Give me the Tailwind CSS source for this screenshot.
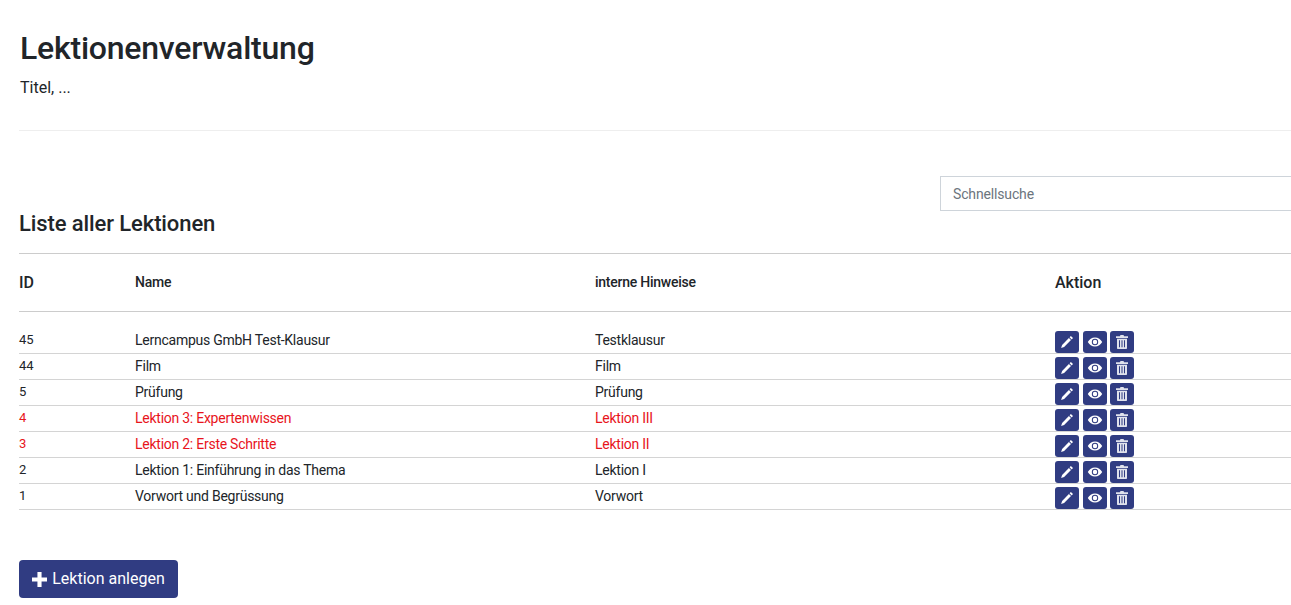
<!DOCTYPE html>
<html lang="de">
<head>
<meta charset="utf-8">
<title>Lektionenverwaltung</title>
<script src="https://cdn.jsdelivr.net/npm/@tailwindcss/browser@4"></script>
</head>
<body class="bg-white overflow-hidden font-['Roboto',sans-serif] text-[#212529]">
<div class="w-[1291px] h-[605px] overflow-hidden pl-[19px]">
  <header class="pt-[29px]">
    <h1 class="text-[32px] leading-[38px] font-medium tracking-[-0.22px] pl-px">Lektionenverwaltung</h1>
    <p class="text-base leading-6 mt-[9px] pl-px">Titel, ...</p>
    <hr class="mt-[30px] border-t border-[#eeeeee]">
  </header>
  <div class="relative h-[122px]">
    <input type="text" placeholder="Schnellsuche" class="absolute left-[921px] top-[45px] w-[360px] h-[35px] border border-[#ced4da] px-3 text-sm tracking-[-0.15px] text-[#495057] placeholder:text-[#6c757d] outline-none">
    <h2 class="absolute left-0 top-[80px] text-[22px] leading-[26px] font-medium tracking-[-0.1px]">Liste aller Lektionen</h2>
  </div>
  <table class="w-[1272px] table-fixed border-collapse text-sm tracking-[-0.25px]">
    <colgroup><col class="w-[116px]"><col class="w-[460px]"><col class="w-[460px]"><col class="w-[236px]"></colgroup>
    <thead>
      <tr class="h-[58px] border-y border-[#cccccc] text-left">
        <th class="font-medium text-base tracking-normal">ID</th>
        <th class="font-medium pb-[2px]">Name</th>
        <th class="font-medium pb-[2px]">interne Hinweise</th>
        <th class="font-medium text-base tracking-normal">Aktion</th>
      </tr>
    </thead>
    <tbody>
      <tr><td class="h-[16px] p-0" colspan="4"></td></tr>
      <tr class="h-[26px] border-b border-[#d4d4d4]">
        <td class="align-bottom pb-[3px] text-[13px] tracking-normal">45</td><td class="align-bottom pb-[3px]">Lerncampus GmbH Test-Klausur</td><td class="align-bottom pb-[3px]">Testklausur</td>
        <td class="align-bottom"><div class="flex gap-[3.5px]">
          <button class="w-6 h-[22px] rounded-[3px] bg-[#303c82] flex items-center justify-center"><svg viewBox="0 0 14 14" class="w-[14px] h-[14px]" fill="#fff"><path d="M10.900 1l2.100 2.100-1.300 1.300-2.100-2.100zM8.900 3l2.100 2.100-6.900 6.900-3 1 1-3z"/></svg></button>
          <button class="w-6 h-[22px] rounded-[3px] bg-[#303c82] flex items-center justify-center"><svg viewBox="0 0 16 12" class="w-[16px] h-[12px]" fill="#fff"><path fill-rule="evenodd" d="M8 1.500C4.800 1.500 2.300 3.300.8 6c1.500 2.700 4 4.500 7.200 4.500s5.700-1.800 7.200-4.500C13.700 3.300 11.200 1.500 8 1.500zm0 1.300a3.200 3.200 0 110 6.400 3.200 3.200 0 010-6.400z"/><circle cx="8" cy="6" r="2.200"/></svg></button>
          <button class="w-6 h-[22px] rounded-[3px] bg-[#303c82] flex items-center justify-center"><svg viewBox="0 0 14 14" class="w-[14px] h-[14px]" fill="#fff"><path fill-rule="evenodd" d="M5.500 0h3l.6 1.300H13v1.600H1V1.300h3.900zM2 3.800h10V13c0 .6-.4 1-1 1H3c-.6 0-1-.4-1-1zM4 5.300v7h1v-7zm2.500 0v7h1v-7zm2.500 0v7h1v-7z" opacity=".85"/></svg></button>
        </div></td>
      </tr>
      <tr class="h-[26px] border-b border-[#d4d4d4]">
        <td class="align-bottom pb-[3px] text-[13px] tracking-normal">44</td><td class="align-bottom pb-[3px]">Film</td><td class="align-bottom pb-[3px]">Film</td>
        <td class="align-bottom"><div class="flex gap-[3.5px]">
          <button class="w-6 h-[22px] rounded-[3px] bg-[#303c82] flex items-center justify-center"><svg viewBox="0 0 14 14" class="w-[14px] h-[14px]" fill="#fff"><path d="M10.900 1l2.100 2.100-1.300 1.300-2.100-2.100zM8.900 3l2.100 2.100-6.900 6.900-3 1 1-3z"/></svg></button>
          <button class="w-6 h-[22px] rounded-[3px] bg-[#303c82] flex items-center justify-center"><svg viewBox="0 0 16 12" class="w-[16px] h-[12px]" fill="#fff"><path fill-rule="evenodd" d="M8 1.500C4.800 1.500 2.300 3.300.8 6c1.500 2.700 4 4.500 7.200 4.500s5.700-1.800 7.200-4.500C13.700 3.300 11.200 1.500 8 1.500zm0 1.300a3.200 3.200 0 110 6.400 3.200 3.200 0 010-6.400z"/><circle cx="8" cy="6" r="2.200"/></svg></button>
          <button class="w-6 h-[22px] rounded-[3px] bg-[#303c82] flex items-center justify-center"><svg viewBox="0 0 14 14" class="w-[14px] h-[14px]" fill="#fff"><path fill-rule="evenodd" d="M5.500 0h3l.6 1.300H13v1.600H1V1.300h3.900zM2 3.800h10V13c0 .6-.4 1-1 1H3c-.6 0-1-.4-1-1zM4 5.300v7h1v-7zm2.500 0v7h1v-7zm2.500 0v7h1v-7z" opacity=".85"/></svg></button>
        </div></td>
      </tr>
      <tr class="h-[26px] border-b border-[#d4d4d4]">
        <td class="align-bottom pb-[3px] text-[13px] tracking-normal">5</td><td class="align-bottom pb-[3px]">Prüfung</td><td class="align-bottom pb-[3px]">Prüfung</td>
        <td class="align-bottom"><div class="flex gap-[3.5px]">
          <button class="w-6 h-[22px] rounded-[3px] bg-[#303c82] flex items-center justify-center"><svg viewBox="0 0 14 14" class="w-[14px] h-[14px]" fill="#fff"><path d="M10.900 1l2.100 2.100-1.300 1.300-2.100-2.100zM8.900 3l2.100 2.100-6.900 6.900-3 1 1-3z"/></svg></button>
          <button class="w-6 h-[22px] rounded-[3px] bg-[#303c82] flex items-center justify-center"><svg viewBox="0 0 16 12" class="w-[16px] h-[12px]" fill="#fff"><path fill-rule="evenodd" d="M8 1.500C4.800 1.500 2.300 3.300.8 6c1.500 2.700 4 4.500 7.200 4.500s5.700-1.800 7.200-4.500C13.700 3.300 11.200 1.500 8 1.500zm0 1.300a3.200 3.200 0 110 6.400 3.200 3.200 0 010-6.400z"/><circle cx="8" cy="6" r="2.200"/></svg></button>
          <button class="w-6 h-[22px] rounded-[3px] bg-[#303c82] flex items-center justify-center"><svg viewBox="0 0 14 14" class="w-[14px] h-[14px]" fill="#fff"><path fill-rule="evenodd" d="M5.500 0h3l.6 1.300H13v1.600H1V1.300h3.900zM2 3.800h10V13c0 .6-.4 1-1 1H3c-.6 0-1-.4-1-1zM4 5.300v7h1v-7zm2.500 0v7h1v-7zm2.500 0v7h1v-7z" opacity=".85"/></svg></button>
        </div></td>
      </tr>
      <tr class="h-[26px] border-b border-[#d4d4d4] text-[#e8141c]">
        <td class="align-bottom pb-[3px] text-[13px] tracking-normal">4</td><td class="align-bottom pb-[3px]">Lektion 3: Expertenwissen</td><td class="align-bottom pb-[3px]">Lektion III</td>
        <td class="align-bottom"><div class="flex gap-[3.5px]">
          <button class="w-6 h-[22px] rounded-[3px] bg-[#303c82] flex items-center justify-center"><svg viewBox="0 0 14 14" class="w-[14px] h-[14px]" fill="#fff"><path d="M10.900 1l2.100 2.100-1.300 1.300-2.100-2.100zM8.900 3l2.100 2.100-6.900 6.900-3 1 1-3z"/></svg></button>
          <button class="w-6 h-[22px] rounded-[3px] bg-[#303c82] flex items-center justify-center"><svg viewBox="0 0 16 12" class="w-[16px] h-[12px]" fill="#fff"><path fill-rule="evenodd" d="M8 1.500C4.800 1.500 2.300 3.300.8 6c1.500 2.700 4 4.500 7.200 4.500s5.700-1.800 7.200-4.500C13.700 3.300 11.200 1.500 8 1.500zm0 1.300a3.200 3.200 0 110 6.400 3.200 3.200 0 010-6.400z"/><circle cx="8" cy="6" r="2.200"/></svg></button>
          <button class="w-6 h-[22px] rounded-[3px] bg-[#303c82] flex items-center justify-center"><svg viewBox="0 0 14 14" class="w-[14px] h-[14px]" fill="#fff"><path fill-rule="evenodd" d="M5.500 0h3l.6 1.300H13v1.600H1V1.300h3.900zM2 3.800h10V13c0 .6-.4 1-1 1H3c-.6 0-1-.4-1-1zM4 5.300v7h1v-7zm2.500 0v7h1v-7zm2.500 0v7h1v-7z" opacity=".85"/></svg></button>
        </div></td>
      </tr>
      <tr class="h-[26px] border-b border-[#d4d4d4] text-[#e8141c]">
        <td class="align-bottom pb-[3px] text-[13px] tracking-normal">3</td><td class="align-bottom pb-[3px]">Lektion 2: Erste Schritte</td><td class="align-bottom pb-[3px]">Lektion II</td>
        <td class="align-bottom"><div class="flex gap-[3.5px]">
          <button class="w-6 h-[22px] rounded-[3px] bg-[#303c82] flex items-center justify-center"><svg viewBox="0 0 14 14" class="w-[14px] h-[14px]" fill="#fff"><path d="M10.900 1l2.100 2.100-1.300 1.300-2.100-2.100zM8.900 3l2.100 2.100-6.900 6.900-3 1 1-3z"/></svg></button>
          <button class="w-6 h-[22px] rounded-[3px] bg-[#303c82] flex items-center justify-center"><svg viewBox="0 0 16 12" class="w-[16px] h-[12px]" fill="#fff"><path fill-rule="evenodd" d="M8 1.500C4.800 1.500 2.300 3.300.8 6c1.500 2.700 4 4.500 7.200 4.500s5.700-1.800 7.200-4.500C13.700 3.300 11.200 1.500 8 1.500zm0 1.300a3.200 3.200 0 110 6.400 3.200 3.200 0 010-6.400z"/><circle cx="8" cy="6" r="2.200"/></svg></button>
          <button class="w-6 h-[22px] rounded-[3px] bg-[#303c82] flex items-center justify-center"><svg viewBox="0 0 14 14" class="w-[14px] h-[14px]" fill="#fff"><path fill-rule="evenodd" d="M5.500 0h3l.6 1.300H13v1.600H1V1.300h3.900zM2 3.800h10V13c0 .6-.4 1-1 1H3c-.6 0-1-.4-1-1zM4 5.300v7h1v-7zm2.500 0v7h1v-7zm2.500 0v7h1v-7z" opacity=".85"/></svg></button>
        </div></td>
      </tr>
      <tr class="h-[26px] border-b border-[#d4d4d4]">
        <td class="align-bottom pb-[3px] text-[13px] tracking-normal">2</td><td class="align-bottom pb-[3px]">Lektion 1: Einführung in das Thema</td><td class="align-bottom pb-[3px]">Lektion I</td>
        <td class="align-bottom"><div class="flex gap-[3.5px]">
          <button class="w-6 h-[22px] rounded-[3px] bg-[#303c82] flex items-center justify-center"><svg viewBox="0 0 14 14" class="w-[14px] h-[14px]" fill="#fff"><path d="M10.900 1l2.100 2.100-1.300 1.300-2.100-2.100zM8.900 3l2.100 2.100-6.900 6.900-3 1 1-3z"/></svg></button>
          <button class="w-6 h-[22px] rounded-[3px] bg-[#303c82] flex items-center justify-center"><svg viewBox="0 0 16 12" class="w-[16px] h-[12px]" fill="#fff"><path fill-rule="evenodd" d="M8 1.500C4.800 1.500 2.300 3.300.8 6c1.500 2.700 4 4.500 7.200 4.500s5.700-1.800 7.200-4.500C13.700 3.300 11.200 1.500 8 1.500zm0 1.300a3.200 3.200 0 110 6.400 3.200 3.200 0 010-6.400z"/><circle cx="8" cy="6" r="2.200"/></svg></button>
          <button class="w-6 h-[22px] rounded-[3px] bg-[#303c82] flex items-center justify-center"><svg viewBox="0 0 14 14" class="w-[14px] h-[14px]" fill="#fff"><path fill-rule="evenodd" d="M5.500 0h3l.6 1.300H13v1.600H1V1.300h3.900zM2 3.800h10V13c0 .6-.4 1-1 1H3c-.6 0-1-.4-1-1zM4 5.300v7h1v-7zm2.500 0v7h1v-7zm2.500 0v7h1v-7z" opacity=".85"/></svg></button>
        </div></td>
      </tr>
      <tr class="h-[26px] border-b border-[#d4d4d4]">
        <td class="align-bottom pb-[3px] text-[13px] tracking-normal">1</td><td class="align-bottom pb-[3px]">Vorwort und Begrüssung</td><td class="align-bottom pb-[3px]">Vorwort</td>
        <td class="align-bottom"><div class="flex gap-[3.5px]">
          <button class="w-6 h-[22px] rounded-[3px] bg-[#303c82] flex items-center justify-center"><svg viewBox="0 0 14 14" class="w-[14px] h-[14px]" fill="#fff"><path d="M10.900 1l2.100 2.100-1.300 1.300-2.100-2.100zM8.900 3l2.100 2.100-6.900 6.900-3 1 1-3z"/></svg></button>
          <button class="w-6 h-[22px] rounded-[3px] bg-[#303c82] flex items-center justify-center"><svg viewBox="0 0 16 12" class="w-[16px] h-[12px]" fill="#fff"><path fill-rule="evenodd" d="M8 1.500C4.800 1.500 2.300 3.300.8 6c1.500 2.700 4 4.500 7.200 4.500s5.700-1.800 7.200-4.500C13.700 3.300 11.200 1.500 8 1.500zm0 1.300a3.200 3.200 0 110 6.400 3.200 3.200 0 010-6.400z"/><circle cx="8" cy="6" r="2.200"/></svg></button>
          <button class="w-6 h-[22px] rounded-[3px] bg-[#303c82] flex items-center justify-center"><svg viewBox="0 0 14 14" class="w-[14px] h-[14px]" fill="#fff"><path fill-rule="evenodd" d="M5.500 0h3l.6 1.300H13v1.600H1V1.300h3.900zM2 3.800h10V13c0 .6-.4 1-1 1H3c-.6 0-1-.4-1-1zM4 5.300v7h1v-7zm2.500 0v7h1v-7zm2.500 0v7h1v-7z" opacity=".85"/></svg></button>
        </div></td>
      </tr>
    </tbody>
  </table>
  <button class="mt-[50px] w-[159px] h-[38px] rounded bg-[#303c82] text-white text-base flex items-center justify-center gap-[5px]">
    <svg viewBox="0 0 16 16" class="w-[15px] h-[15px]" fill="#fff"><path d="M5.800 0h4.400v5.800H16v4.400h-5.800V16H5.800v-5.800H0V5.800h5.800z"/></svg>
    Lektion anlegen
  </button>
</div>
</body>
</html>
